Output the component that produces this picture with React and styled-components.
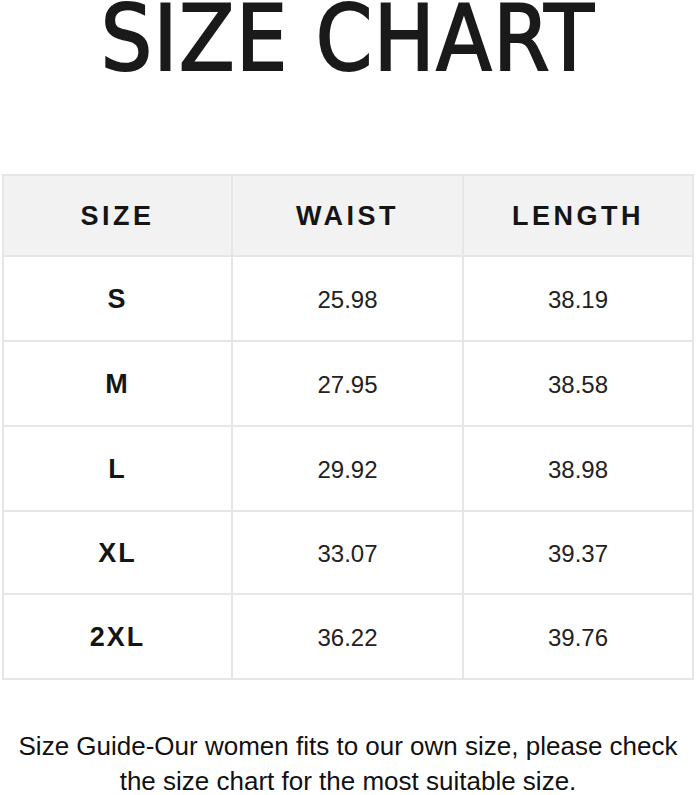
import React from 'react';
import styled, { createGlobalStyle } from 'styled-components';

const GlobalStyle = createGlobalStyle`
  body {
    margin: 0;
    background: #ffffff;
    font-family: "Liberation Sans", Arial, sans-serif;
  }
`;

const Page = styled.div`
  width: 696px;
  display: flex;
  flex-direction: column;
  align-items: center;
`;

const TitleBox = styled.div`
  height: 174px;
  width: 100%;
  flex-shrink: 0;
  display: flex;
  justify-content: center;
`;

const Title = styled.h1`
  margin: 0;
  font-family: "DejaVu Sans Condensed", "Liberation Sans Narrow", "Liberation Sans", sans-serif;
  font-weight: 400;
  font-size: 90px;
  line-height: 78px;
  letter-spacing: 1.5px;
  color: #1a1a1a;
  -webkit-text-stroke: 2px #1a1a1a;
`;

const Table = styled.div`
  width: 692px;
  flex-shrink: 0;
  display: grid;
  grid-template-columns: 227px 229px 228px;
  grid-template-rows: 79px 83px 83px 83px 81px 83px;
  gap: 2px;
  padding: 2px;
  background: #e6e6e6;
  box-sizing: border-box;
`;

const Cell = styled.div`
  display: flex;
  align-items: center;
  justify-content: center;
  background: ${({ head }) => (head ? '#f2f2f2' : '#ffffff')};
  color: ${({ bold }) => (bold ? '#151515' : '#222222')};
  font-size: ${({ bold }) => (bold ? 27 : 24)}px;
  font-weight: ${({ bold }) => (bold ? 700 : 400)};
  letter-spacing: ${({ head, bold }) => (head ? 3.5 : bold ? 2 : 0)}px;
  padding-top: 2px;
`;

const Caption = styled.p`
  margin: 49px 0 0;
  width: 680px;
  text-align: center;
  font-size: 26px;
  line-height: 35px;
  color: #111111;
`;

const rows = [
  ['S', '25.98', '38.19'],
  ['M', '27.95', '38.58'],
  ['L', '29.92', '38.98'],
  ['XL', '33.07', '39.37'],
  ['2XL', '36.22', '39.76'],
];

export default function App() {
  return (
    <Page>
      <GlobalStyle />
      <TitleBox>
        <Title>SIZE CHART</Title>
      </TitleBox>
      <Table>
        {['SIZE', 'WAIST', 'LENGTH'].map((h) => (
          <Cell key={h} head bold>{h}</Cell>
        ))}
        {rows.map((r) => (
          <React.Fragment key={r[0]}>
            <Cell bold>{r[0]}</Cell>
            <Cell>{r[1]}</Cell>
            <Cell>{r[2]}</Cell>
          </React.Fragment>
        ))}
      </Table>
      <Caption>
        Size Guide-Our women fits to our own size, please check the size chart for the most suitable size.
      </Caption>
    </Page>
  );
}
